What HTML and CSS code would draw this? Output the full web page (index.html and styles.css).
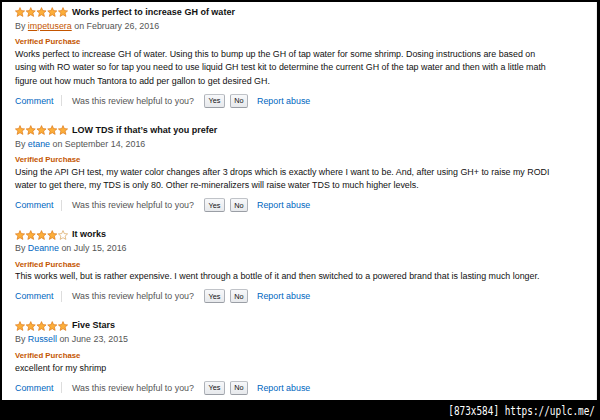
FILE: index.html
```html
<!DOCTYPE html>
<html>
<head>
<meta charset="utf-8">
<link rel="stylesheet" href="styles.css">
</head>
<body>
<svg class="defs" width="0" height="0">
  <defs>
    <symbol id="star" viewBox="0 0 10 10">
      <path d="M5 0.6 L6.3 3.6 L9.6 3.9 L7.1 6.1 L7.9 9.4 L5 7.7 L2.1 9.4 L2.9 6.1 L0.4 3.9 L3.7 3.6 Z" fill="#fcae3a" stroke="#dc7a1c" stroke-width="0.7" stroke-linejoin="round"/>
    </symbol>
    <symbol id="star-empty" viewBox="0 0 10 10">
      <path d="M5 0.6 L6.3 3.6 L9.6 3.9 L7.1 6.1 L7.9 9.4 L5 7.7 L2.1 9.4 L2.9 6.1 L0.4 3.9 L3.7 3.6 Z" fill="#fff" stroke="#d9a35a" stroke-width="0.7" stroke-linejoin="round"/>
    </symbol>
  </defs>
</svg>
<div class="frame">
  <div class="review">
    <div class="head">
      <svg class="stars" viewBox="0 0 53 10"><use href="#star" x="0" width="10" height="10"/><use href="#star" x="10.75" width="10" height="10"/><use href="#star" x="21.5" width="10" height="10"/><use href="#star" x="32.25" width="10" height="10"/><use href="#star" x="43" width="10" height="10"/></svg>
      <span class="title">Works perfect to increase GH of water</span>
    </div>
    <div class="byline">By <a class="user visited">impetusera</a> on February 26, 2016</div>
    <div class="verified">Verified Purchase</div>
    <div class="body">Works perfect to increase GH of water. Using this to bump up the GH of tap water for some shrimp. Dosing instructions are based on<br>using with RO water so for tap you need to use liquid GH test kit to determine the current GH of the tap water and then with a little math<br>figure out how much Tantora to add per gallon to get desired GH.</div>
    <div class="actions"><span class="link">Comment</span><span class="sep"></span><span class="helpful">Was this review helpful to you?</span><span class="btn yes">Yes</span><span class="btn no">No</span><span class="link report">Report abuse</span></div>
  </div>
  <div class="review">
    <div class="head">
      <svg class="stars" viewBox="0 0 53 10"><use href="#star" x="0" width="10" height="10"/><use href="#star" x="10.75" width="10" height="10"/><use href="#star" x="21.5" width="10" height="10"/><use href="#star" x="32.25" width="10" height="10"/><use href="#star" x="43" width="10" height="10"/></svg>
      <span class="title">LOW TDS if that’s what you prefer</span>
    </div>
    <div class="byline">By <a class="user">etane</a> on September 14, 2016</div>
    <div class="verified">Verified Purchase</div>
    <div class="body">Using the API GH test, my water color changes after 3 drops which is exactly where I want to be. And, after using GH+ to raise my RODI<br>water to get there, my TDS is only 80. Other re-mineralizers will raise water TDS to much higher levels.</div>
    <div class="actions"><span class="link">Comment</span><span class="sep"></span><span class="helpful">Was this review helpful to you?</span><span class="btn yes">Yes</span><span class="btn no">No</span><span class="link report">Report abuse</span></div>
  </div>
  <div class="review">
    <div class="head">
      <svg class="stars" viewBox="0 0 53 10"><use href="#star" x="0" width="10" height="10"/><use href="#star" x="10.75" width="10" height="10"/><use href="#star" x="21.5" width="10" height="10"/><use href="#star" x="32.25" width="10" height="10"/><use href="#star-empty" x="43" width="10" height="10"/></svg>
      <span class="title">It works</span>
    </div>
    <div class="byline">By <a class="user">Deanne</a> on July 15, 2016</div>
    <div class="verified">Verified Purchase</div>
    <div class="body">This works well, but is rather expensive. I went through a bottle of it and then switched to a powered brand that is lasting much longer.</div>
    <div class="actions"><span class="link">Comment</span><span class="sep"></span><span class="helpful">Was this review helpful to you?</span><span class="btn yes">Yes</span><span class="btn no">No</span><span class="link report">Report abuse</span></div>
  </div>
  <div class="review">
    <div class="head">
      <svg class="stars" viewBox="0 0 53 10"><use href="#star" x="0" width="10" height="10"/><use href="#star" x="10.75" width="10" height="10"/><use href="#star" x="21.5" width="10" height="10"/><use href="#star" x="32.25" width="10" height="10"/><use href="#star" x="43" width="10" height="10"/></svg>
      <span class="title">Five Stars</span>
    </div>
    <div class="byline">By <a class="user">Russell</a> on June 23, 2015</div>
    <div class="verified">Verified Purchase</div>
    <div class="body">excellent for my shrimp</div>
    <div class="actions"><span class="link">Comment</span><span class="sep"></span><span class="helpful">Was this review helpful to you?</span><span class="btn yes">Yes</span><span class="btn no">No</span><span class="link report">Report abuse</span></div>
  </div>
</div>
<div class="footer"><span class="stamp">[873x584] https://uplc.me/</span></div>
</body>
</html>
```
FILE: styles.css
```css
html, body {
  margin: 0;
  padding: 0;
}
body {
  background: #000;
  width: 600px;
  height: 420px;
  overflow: hidden;
  font-family: "Liberation Sans", Arial, sans-serif;
}
.defs {
  position: absolute;
  width: 0;
  height: 0;
}
.frame {
  margin: 2px 3px 0 2px;
  height: 398px;
  box-sizing: border-box;
  background: #fff;
  padding: 3.6px 0 0 13px;
  border-right: 1px solid #eeeeee;
}
.review + .review {
  margin-top: 15px;
}
.head {
  display: flex;
  align-items: center;
  height: 13px;
}
.stars {
  display: block;
  width: 53px;
  height: 10px;
}
.title {
  margin-left: 4px;
  font-size: 9px;
  font-weight: bold;
  color: #111;
  line-height: 13px;
}
.byline {
  font-size: 8.9px;
  line-height: 15px;
  color: #555;
}
.user {
  color: #0066c0;
  text-decoration: none;
}
.user.visited {
  color: #c45500;
  text-decoration: underline;
}
.verified {
  margin-top: 3.7px;
  font-size: 7.8px;
  font-weight: bold;
  color: #c45500;
  line-height: 10px;
}
.body {
  margin-top: 0.6px;
  font-size: 8.9px;
  line-height: 13.35px;
  color: #111;
  white-space: nowrap;
}
.actions {
  margin-top: 4.6px;
  height: 16px;
  display: flex;
  align-items: center;
  font-size: 8.9px;
  white-space: nowrap;
}
.link {
  color: #0066c0;
}
.sep {
  width: 1px;
  height: 11px;
  background: #dddddd;
  margin: 0 9.5px 0 8px;
}
.helpful {
  color: #555;
}
.btn {
  height: 14px;
  box-sizing: border-box;
  border: 1px solid #adb1b8;
  border-top-color: #c0c3c8;
  border-bottom-color: #9a9ea5;
  border-radius: 2px;
  background: linear-gradient(#f7f8fa, #e7e9ec);
  font-size: 7.3px;
  color: #111;
  display: flex;
  align-items: center;
  justify-content: center;
}
.yes {
  width: 21px;
  margin-left: 10px;
}
.no {
  width: 18px;
  margin-left: 5px;
}
.report {
  margin-left: 9px;
}
.footer {
  height: 20px;
  display: flex;
  justify-content: flex-end;
  align-items: center;
  padding-right: 5px;
}
.stamp {
  display: inline-block;
  color: #fff;
  font-family: "DejaVu Sans Mono", monospace;
  font-size: 9.4px;
  transform: scaleY(1.3);
}
```
